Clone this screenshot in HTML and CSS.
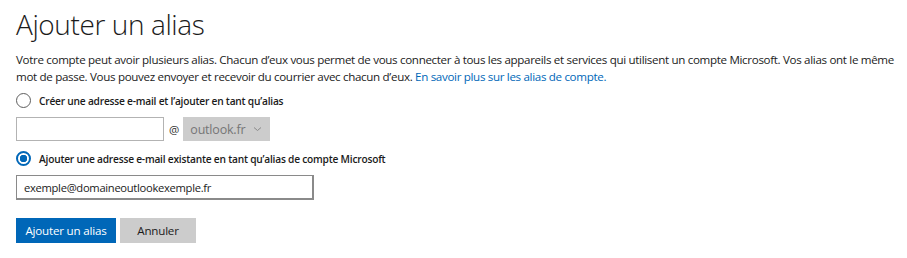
FILE: index.html
```html
<!DOCTYPE html>
<html lang="fr">
<head>
<meta charset="utf-8">
<title>Ajouter un alias</title>
<link rel="stylesheet" href="styles.css">
</head>
<body>
<main class="page">
  <h1 class="title">Ajouter un alias</h1>
  <p class="intro">Votre compte peut avoir plusieurs alias. Chacun d’eux vous permet de vous connecter à tous les appareils et services qui utilisent un compte Microsoft. Vos alias ont le même mot de passe. Vous pouvez envoyer et recevoir du courrier avec chacun d’eux. <a class="link" href="#">En savoir plus sur les alias de compte.</a></p>

  <label class="radio-row">
    <span class="radio"></span>
    <span class="radio-label">Créer une adresse e-mail et l’ajouter en tant qu’alias</span>
  </label>
  <div class="new-row">
    <span class="input input-short"></span>
    <span class="at">@</span>
    <span class="select">outlook.fr
      <svg class="chev" width="9" height="6" viewBox="0 0 9 6"><path d="M1 1.5 L4.5 4.5 L8 1.5" fill="none" stroke="#8a8a8a" stroke-width="1"/></svg>
    </span>
  </div>

  <label class="radio-row radio-row-second">
    <span class="radio radio-checked"></span>
    <span class="radio-label">Ajouter une adresse e-mail existante en tant qu’alias de compte Microsoft</span>
  </label>
  <div class="existing-row">
    <span class="input input-long">exemple@domaineoutlookexemple.fr</span>
  </div>

  <div class="actions">
    <button class="btn btn-primary">Ajouter un alias</button>
    <button class="btn btn-secondary">Annuler</button>
  </div>
</main>
</body>
</html>
```
FILE: styles.css
```css
html, body {
  margin: 0;
  padding: 0;
  background: #ffffff;
}
body {
  font-family: "Open Sans", "Noto Sans", "Liberation Sans", sans-serif;
  color: #1b1b1b;
}
.page {
  padding: 6px 6px 0 16px;
}
.title {
  margin: 0;
  font-size: 28px;
  font-weight: 300;
  line-height: 36px;
  color: #1b1b1b;
  letter-spacing: -0.4px;
}
.intro {
  margin: 10px 0 0 0;
  font-size: 11.6px;
  line-height: 16.5px;
  letter-spacing: -0.33px;
}
.link {
  color: #0067b8;
  text-decoration: none;
}
.radio-row {
  display: flex;
  align-items: center;
  gap: 8px;
  margin-top: 8px;
  height: 15px;
}
.radio-row-second {
  margin-top: 10px;
}
.radio {
  box-sizing: border-box;
  width: 15px;
  height: 15px;
  border: 1px solid #5e5e5e;
  border-radius: 50%;
  flex: none;
}
.radio-checked {
  border: 2px solid #0067b8;
  background: radial-gradient(circle, #0067b8 0 3.5px, #ffffff 4px);
}
.radio-label {
  font-size: 10.2px;
  font-weight: 600;
  letter-spacing: -0.22px;
}
.new-row {
  display: flex;
  align-items: center;
  margin-top: 9px;
}
.input {
  box-sizing: border-box;
  height: 24px;
  border: 1px solid #b3b3b3;
  background: #fff;
  display: flex;
  align-items: center;
}
.input-short {
  width: 148px;
}
.at {
  font-size: 11.5px;
  margin: 0 4px 0 5px;
  color: #333;
}
.select {
  box-sizing: border-box;
  width: 87px;
  height: 24px;
  background: #cccccc;
  color: #767676;
  font-size: 12.5px;
  letter-spacing: -0.2px;
  display: flex;
  align-items: center;
  justify-content: space-between;
  padding: 0 8px 0 7px;
}
.chev {
  display: block;
}
.existing-row {
  margin-top: 9px;
}
.input-long {
  width: 298px;
  height: 25px;
  border-style: solid;
  border-width: 1px 2px 2px 1px;
  border-color: #8a8a8a;
  padding-left: 7px;
  color: #1b1b1b;
  font-size: 11.2px;
  letter-spacing: -0.3px;
}
.actions {
  display: flex;
  gap: 4px;
  margin-top: 18px;
}
.btn {
  height: 25px;
  border: 0;
  font-family: inherit;
  font-size: 11.6px;
  letter-spacing: -0.2px;
  padding: 0;
  cursor: pointer;
}
.btn-primary {
  width: 100px;
  background: #0067b8;
  color: #ffffff;
}
.btn-secondary {
  width: 76px;
  background: #cccccc;
  color: #1b1b1b;
}
```
